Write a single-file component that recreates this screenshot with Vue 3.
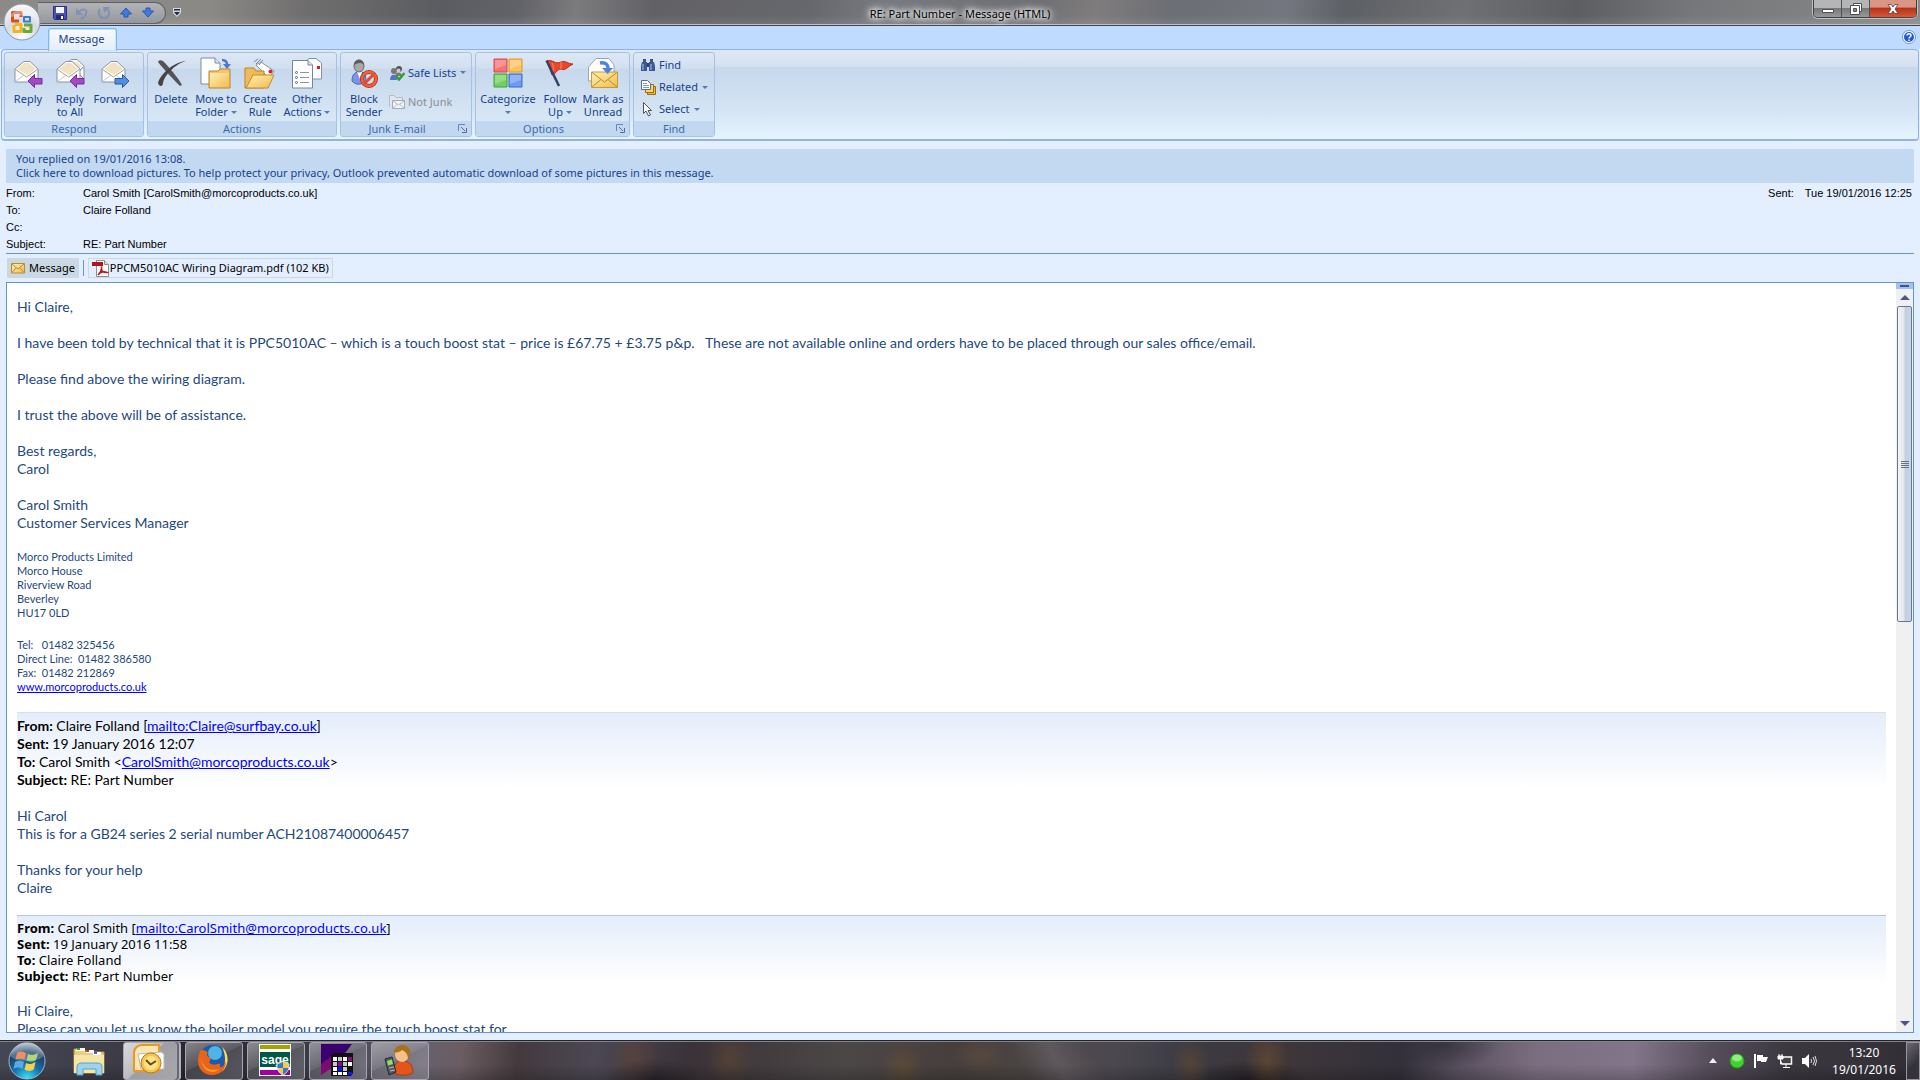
<script setup>
const envelope = `<path d="M3 12 L12 4.500 H18 L26 12 V25 H3Z" fill="#fdfdfd" stroke="#8b93a3"/><path d="M5 12 L12.500 6 H17 L24 12 L15 18Z" fill="#efe3c4"/><path d="M3.500 12.500 L14.500 20 L25.500 12.500" fill="none" stroke="#a9a28e"/><path d="M3.500 24.500 L12 18 M25.500 24.500 L17 18" stroke="#c6c9d2"/>`
const arrowLeft = `<path d="M16 24 L22.500 17.500 V21.500 H30 V27 H22.500 V30.500Z" fill="#a44ac4" stroke="#7a2c9b" stroke-linejoin="round"/>`

const icons = {
  reply: envelope + arrowLeft,
  replyAll: `<path d="M11 9 L17 2.500 H23 L30 9 V22 H12Z" fill="#fff" stroke="#8b93a3"/><path d="M13 9 L18 4.500 H22 L28 9 L22 14Z" fill="#efe3c4"/><path d="M29 10 L24 16 L29 21" fill="none" stroke="#777"/>` + envelope + arrowLeft,
  forward: envelope + `<path d="M30 24 L23.500 17.500 V21.500 H16 V27 H23.500 V30.500Z" fill="#4f8ee0" stroke="#27579f" stroke-linejoin="round"/>`,
  del: `<path d="M3 5 C4 2 8 3 10 6 C18 15 24 22 27 28 L25 29 C20 24 10 14 3 5Z" fill="#555"/><path d="M31 4 C22 6 10 17 8 26 C8 30 4 30 3 26 C5 18 18 5 31 4Z" fill="#454545"/>`,
  move: `<path d="M1 1 H15 L20 6 V27 H1Z" fill="#fff" stroke="#7e8aa5"/><path d="M15 1 V6 H20" fill="#dde4f0" stroke="#7e8aa5"/><path d="M9 14 H18 L20 12 H30 V31 H9Z" fill="#f3c66c" stroke="#b98527"/><path d="M10 16 H29 V30 H10Z" fill="url(#gold)"/><path d="M22 3 C26 3 27 5 27 8" fill="none" stroke="#4c79d0" stroke-width="2.500"/><path d="M23 7 H31 L27 12Z" fill="#4c79d0"/>`,
  create: `<path d="M12 8 L17 5 L30 14 L25 21Z" fill="#fff" stroke="#8a93a8"/><path d="M10 5 l4 -3 M12 7 l5 -5 M15 8 l4 -5" stroke="#7a8399"/><circle cx="26.500" cy="14.500" r="2" fill="#d22"/><path d="M1 31 V11 H10 L12 14 H20 V31Z" fill="#eebb55" stroke="#b98527"/><path d="M2 31 L9 18 H30 L24 31Z" fill="url(#gold)" stroke="#c08d2c"/>`,
  other: `<path d="M14 5 L18 1.500 H25 L30.500 6 V22 H14Z" fill="#fff" stroke="#8290ab"/><path d="M26 9 h3 v3 h-3z" fill="#c22"/><path d="M1.500 3.500 H17 L21.500 8 V31 H1.500Z" fill="#fff" stroke="#7785a2"/><path d="M17 3.500 V8 H21.500" fill="#dde4f0" stroke="#7785a2"/><path d="M9 15.500 H18 M9 20.500 H18 M9 25.500 H18" stroke="#8a94a8"/><g fill="#fff" stroke="#53607d"><circle cx="5.500" cy="15.500" r="1"/><circle cx="5.500" cy="20.500" r="1"/><circle cx="5.500" cy="25.500" r="1"/></g>`,
  block: `<path d="M4 24 C4 16 8 15 12 15 C17 15 18 19 18 25 C12 28 7 28 4 24Z" fill="#7d96e3" stroke="#4d62b5"/><path d="M9 15 L12 22 L14 15Z" fill="#fff"/><ellipse cx="11" cy="9" rx="5" ry="6" fill="#a9a9a9" stroke="#666"/><path d="M6 8 C6 1 16 1 16 8 C13 5 10 6 6 8Z" fill="#5d5d5d"/><circle cx="21" cy="22" r="7" fill="none" stroke="#b72b12" stroke-width="4"/><circle cx="21" cy="22" r="7" fill="none" stroke="#f0623e" stroke-width="2.500"/><path d="M16 27 L26 17" stroke="#e04e2b" stroke-width="3"/>`,
  categorize: `<path d="M2 2h13v13h-13z" fill="#f47174" stroke="#d8484e"/><path d="M17 2h13v13h-13z" fill="#fbc15c" stroke="#e09a1a"/><path d="M2 17h13v13h-13z" fill="#72d060" stroke="#3fa238"/><path d="M17 17h13v13h-13z" fill="#6d9cf0" stroke="#3b6bcd"/><path d="M3 3h11v5l-11 4zM18 3h11v5l-11 4zM3 18h11v5l-11 4zM18 18h11v5l-11 4z" fill="#fff" opacity=".25"/>`,
  flag: `<path d="M3 4 C9 2 11 8 17 5 C21 3 24 7 29 7 C23 10 22 14 17 12 C13 12 12 17 8 18Z" fill="#e8492b" stroke="#b72b12"/><path d="M8 6 C10 9 9 12 9 16 M17 5 V12" stroke="#ff8b67" fill="none"/><path d="M2.500 3.500 L15 29" stroke="#2f4168" stroke-width="2.500"/>`,
  unread: `<path d="M1.500 10 L9 1.500 H22 L27 8 V24 H1.500Z" fill="#fdfdfd" stroke="#9aa6ba"/><path d="M4.500 15 H30.500 V30.500 H4.500Z" fill="url(#gold)" stroke="#c69c2d"/><path d="M5 15.500 L17.500 25 L30 15.500 M5 30 L14 22.500 M30 30 L21 22.500" fill="none" stroke="#b98f2a"/><path d="M13 6 C19 5 21 8 21 11" fill="none" stroke="#4c84dd" stroke-width="3.500"/><path d="M15 11 H26 L20.500 17Z" fill="#4c84dd"/>`
}

const small = {
  safe: `<circle cx="5" cy="6" r="3" fill="#777"/><circle cx="10" cy="4" r="3" fill="#555"/><circle cx="9.500" cy="5.500" r="2" fill="#ccc"/><path d="M1 15 C1 8 8 8 8 15Z" fill="#5872c8"/><path d="M6 11 C7 6 13 7 13 11Z" fill="#777"/><path d="M7 11 L10 14.500 L15.500 8" fill="none" stroke="#2f9e2b" stroke-width="2.500"/>`,
  junk: `<path d="M.5 12.500 V1.500 H5 L7 3.500 H13.500 V6" fill="#e4e7ef" stroke="#b2b9c9"/><path d="M3.500 6.500 H15.500 V14.500 H3.500Z" fill="#f2f4f8" stroke="#a4abbd"/><path d="M4 7 L9.500 11 L15 7 M4 14 L8 10.500 M15 14 L11 10.500" fill="none" stroke="#b2b9c9"/>`,
  find: `<path d="M3 2h3v3h-3zM10 2h3v3h-3z" fill="#3d557f"/><path d="M2 5h5v9h-6V9zM9 5h5l1 4v5h-6z" fill="#3b5b95"/><path d="M7 6h2v4h-2z" fill="#2a4272"/><path d="M3 7v6M11 7v6" stroke="#a9c6f0"/>`,
  related: `<path d="M7.500 7.500h8v8h-8z" fill="#f4b72f" stroke="#996d0e"/><path d="M5.500 5.500h8v8h-8z" fill="#fbd573" stroke="#996d0e"/><path d="M1.500 1.500h6l3 3v6h-9z" fill="#fff" stroke="#5b6c91"/><path d="M3 4.500h4M3 6.500h6M3 8.500h6" stroke="#8b98b5"/>`,
  select: `<path d="M3.500 1.500 V12.500 L6 10 L8.500 15 L10.500 14 L8 9.500 H11.500Z" fill="#fff" stroke="#4b5368"/>`
}

const groups = [
  { name: 'Respond', width: 140, big: [
    { id: 'reply', w: 46, lines: ['Reply'] },
    { id: 'replyAll', w: 38, lines: ['Reply', 'to All'] },
    { id: 'forward', w: 52, lines: ['Forward'] }
  ] },
  { name: 'Actions', width: 190, big: [
    { id: 'del', w: 46, lines: ['Delete'] },
    { id: 'move', w: 44, lines: ['Move to', 'Folder'], drop: true },
    { id: 'create', w: 44, lines: ['Create', 'Rule'] },
    { id: 'other', w: 50, lines: ['Other', 'Actions'], drop: true }
  ] },
  { name: 'Junk E-mail', width: 132, launcher: true, big: [
    { id: 'block', w: 46, lines: ['Block', 'Sender'] }
  ], rows: [
    { id: 'safe', text: 'Safe Lists', drop: true },
    { id: 'junk', text: 'Not Junk', disabled: true }
  ] },
  { name: 'Options', width: 155, launcher: true, big: [
    { id: 'categorize', w: 64, lines: ['Categorize', ''], drop: true },
    { id: 'flag', w: 40, lines: ['Follow', 'Up'], drop: true },
    { id: 'unread', w: 46, lines: ['Mark as', 'Unread'] }
  ] },
  { name: 'Find', width: 82, big: [], rows: [
    { id: 'find', text: 'Find' },
    { id: 'related', text: 'Related', drop: true },
    { id: 'select', text: 'Select', drop: true }
  ] }
]
</script>

<template>
  <div class="screen">
    <svg class="defs" width="0" height="0" aria-hidden="true">
      <defs>
        <linearGradient id="gold" x1="0" y1="0" x2="1" y2="1"><stop offset="0" stop-color="#fff0b0" /><stop offset="1" stop-color="#f0bb52" /></linearGradient>
        <radialGradient id="orb" cx=".5" cy=".9" r=".9"><stop offset="0" stop-color="#fff" /><stop offset=".5" stop-color="#d5dae4" /><stop offset="1" stop-color="#fafbfd" /></radialGradient>
        <radialGradient id="start" cx=".5" cy="1" r="1"><stop offset="0" stop-color="#3fe6ff" /><stop offset=".4" stop-color="#1573ae" /><stop offset=".75" stop-color="#1d3e62" /><stop offset="1" stop-color="#a5bdd0" /></radialGradient>
      </defs>
    </svg>

    <header class="titlebar">
      <div class="qat">
        <button aria-label="Save"><svg width="16" height="16" viewBox="0 0 16 16"><path d="M1.500 1.500h13v13h-12l-1-1z" fill="#4b50b5" stroke="#2d2f86" /><path d="M4 2h8v6h-8z" fill="#f4f6fc" /><path d="M4 10h8v4h-8z" fill="#252a68" /><path d="M9 11h2v3h-2z" fill="#fff" /></svg></button>
        <button aria-label="Undo"><svg width="16" height="16" viewBox="0 0 16 16"><path d="M5 7 C8 3 14 4 12 9 C11 12 9 13 7 14" fill="none" stroke="#7f92b6" stroke-width="2" /><path d="M2 3v7h7z" fill="#7f92b6" /></svg></button>
        <button aria-label="Redo"><svg width="16" height="16" viewBox="0 0 16 16"><path d="M4 4 C1 8 4 13 8 13 C13 13 15 7 11 4" fill="none" stroke="#7f92b6" stroke-width="2" /><path d="M7 2h7l-6 6z" fill="#7f92b6" /></svg></button>
        <button aria-label="Previous item"><svg width="16" height="16" viewBox="0 0 16 16"><path d="M8 3L13.500 9H10V12H6V9H2.500Z" fill="#3f7be0" stroke="#2757b5" /></svg></button>
        <button aria-label="Next item"><svg width="16" height="16" viewBox="0 0 16 16"><path d="M8 12L13.500 6H10V3H6V6H2.500Z" fill="#3f7be0" stroke="#2757b5" /></svg></button>
      </div>
      <button class="qat-more" aria-label="Customize"><svg width="8" height="9" viewBox="0 0 8 9"><path d="M0 0h8v5L4 9 0 5z" fill="#d5d8df" /><path d="M1 1h6v1.500h-6zM1 4h6l-3 3.500z" fill="#1f2a44" /></svg></button>
      <h1 class="title">RE: Part Number - Message (HTML)</h1>
      <div class="winbtns">
        <button class="min" aria-label="Minimize"><svg width="14" height="12" viewBox="0 0 14 12"><path d="M1.500 6.500h11v3h-11z" fill="#fff" stroke="#4d5058" /></svg></button>
        <button class="max" aria-label="Restore"><svg width="14" height="14" viewBox="0 0 14 14"><path d="M4.500 1.500h8v8h-8z" fill="#fff" stroke="#4d5058" /><path d="M1.500 3.500h9v9h-9z" fill="#fff" stroke="#4d5058" /><path d="M4.500 6.500h3v3h-3z" fill="#888" stroke="#4d5058" /></svg></button>
        <button class="close" aria-label="Close"><svg width="12" height="12" viewBox="0 0 12 12"><path d="M1 1.500h3L6 4l2-2.500h3L8 6l3 4.500H8L6 8l-2 2.500H1L4 6Z" fill="#fff" stroke="#5d4044" stroke-width=".8" /></svg></button>
      </div>
    </header>

    <button class="office" aria-label="Office menu">
      <svg width="38" height="38" viewBox="0 0 38 38">
        <circle cx="19" cy="19" r="18" fill="url(#orb)" stroke="#8c95a5" />
        <g fill="none" stroke-width="3" stroke-linejoin="round">
          <path d="M16 18H9.500V9.500H18V14" stroke="#e04a16" />
          <path d="M21 14H27V18.500H21Z" stroke="#3a7ed0" stroke-width="2" />
          <path d="M12 21.500H18V28.500H11V22" stroke="#f5b318" />
          <path d="M21 22H28V28.500H21V25" stroke="#6aaa34" />
        </g>
        <path d="M5 15 A15 13 0 0 1 33 15 A30 20 0 0 0 5 15Z" fill="#fff" opacity=".35" />
      </svg>
    </button>

    <nav class="tabs">
      <button class="tab">Message</button>
      <button class="help" aria-label="Help"><svg width="14" height="14" viewBox="0 0 14 14"><circle cx="7" cy="7" r="6.500" fill="#fff" stroke="#6f96cf" /><circle cx="7" cy="7" r="5" fill="#2259cf" /><path d="M5 5.500C5 3 9 3 9 5.500C9 7 7 7 7 8.500M7 9.500V11" fill="none" stroke="#fff" stroke-width="1.500" /></svg></button>
    </nav>

    <section class="ribbon">
      <div v-for="g in groups" :key="g.name" class="group" :style="{ width: g.width + 'px' }">
        <div class="tools">
          <button v-for="b in g.big" :key="b.id" class="big" :style="{ width: b.w + 'px' }">
            <svg width="32" height="32" viewBox="0 0 32 32" v-html="icons[b.id]"></svg>
            <span v-for="(l, i) in b.lines" :key="i" class="line">{{ l }}<i v-if="b.drop && i === 1" class="caret" :class="{ alone: !l }"></i></span>
          </button>
          <div v-if="g.rows" class="rows" :class="{ pair: g.rows.length === 2 }">
            <button v-for="r in g.rows" :key="r.id" class="row" :disabled="r.disabled">
              <svg width="16" height="16" viewBox="0 0 16 16" v-html="small[r.id]"></svg>{{ r.text }}<i v-if="r.drop" class="caret"></i>
            </button>
          </div>
        </div>
        <div class="caption">
          <span class="name">{{ g.name }}</span>
          <button v-if="g.launcher" class="launcher" :aria-label="g.name + ' settings'"><svg width="9" height="9" viewBox="0 0 9 9"><path d="M.5 7V.5H7" fill="none" stroke="#6788b6" /><path d="M3 3l4 4M8.500 4v4.500H4" fill="none" stroke="#4d6e9e" /></svg></button>
        </div>
      </div>
    </section>

    <main class="message">
      <div class="info">
        <p>You replied on 19/01/2016 13:08.</p>
        <p>Click here to download pictures. To help protect your privacy, Outlook prevented automatic download of some pictures in this message.</p>
      </div>
      <div class="meta">
        <dl class="fields">
          <dt>From:</dt><dd>Carol Smith [CarolSmith@morcoproducts.co.uk]</dd>
          <dt>To:</dt><dd>Claire Folland</dd>
          <dt>Cc:</dt><dd></dd>
          <dt>Subject:</dt><dd>RE: Part Number</dd>
        </dl>
        <dl class="sent"><dt>Sent:</dt><dd>Tue 19/01/2016 12:25</dd></dl>
      </div>
      <div class="attachments">
        <button class="att current"><svg width="14" height="12" viewBox="0 0 14 12"><path d="M.5 1.500h13v9.500h-13z" fill="url(#gold)" stroke="#b78d32" /><path d="M1 2l6 5 6-5M1 10.500L5 6M13 10.500L9 6" fill="none" stroke="#b78d32" /></svg>Message</button>
        <span class="split"></span>
        <button class="att file"><svg width="17" height="17" viewBox="0 0 17 17"><path d="M4.500.5h8l4 4v12h-12z" fill="#fff" stroke="#909090" /><path d="M12.500.5v4h4" fill="#ddd" stroke="#909090" /><path d="M0 2h11v4h-11z" fill="#b3141b" /><path d="M6 15C9 12 10 9 9.500 6.500C9 12 12 13 15 12.500C12 11 8 12 6 15Z" fill="none" stroke="#c2151c" stroke-width="1.500" /></svg>PPCM5010AC Wiring Diagram.pdf (102 KB)</button>
      </div>

      <div class="reader">
        <article class="mail">
          <p>Hi Claire,</p>
          <p class="gap">I have been told by technical that it is PPC5010AC – which is a touch boost stat – price is £67.75 + £3.75 p&amp;p.&nbsp;&nbsp; These are not available online and orders have to be placed through our sales office/email.</p>
          <p class="gap">Please find above the wiring diagram.</p>
          <p class="gap">I trust the above will be of assistance.</p>
          <p class="gap">Best regards,<br>Carol</p>
          <p class="gap">Carol Smith<br>Customer Services Manager</p>
          <p class="gap fine">Morco Products Limited<br>Morco House<br>Riverview Road<br>Beverley<br>HU17 0LD</p>
          <p class="gap fine">Tel:&nbsp;&nbsp; 01482 325456<br>Direct Line:&nbsp; 01482 386580<br>Fax:&nbsp; 01482 212869<br><a href="#">www.morcoproducts.co.uk</a></p>
          <div class="quoted gap">
            <b>From:</b> Claire Folland [<a href="#">mailto:Claire@surfbay.co.uk</a>]<br>
            <b>Sent:</b> 19 January 2016 12:07<br>
            <b>To:</b> Carol Smith &lt;<a href="#">CarolSmith@morcoproducts.co.uk</a>&gt;<br>
            <b>Subject:</b> RE: Part Number
          </div>
          <p class="gap">Hi Carol<br>This is for a GB24 series 2 serial number ACH21087400006457</p>
          <p class="gap">Thanks for your help<br>Claire</p>
          <div class="quoted plain gap">
            <b>From:</b> Carol Smith [<a href="#">mailto:CarolSmith@morcoproducts.co.uk</a>]<br>
            <b>Sent:</b> 19 January 2016 11:58<br>
            <b>To:</b> Claire Folland<br>
            <b>Subject:</b> RE: Part Number
          </div>
          <p class="gap">Hi Claire,<br>Please can you let us know the boiler model you require the touch boost stat for</p>
        </article>
        <div class="scroll">
          <div class="splitter"></div>
          <button class="up" aria-label="Scroll up"></button>
          <div class="track"><div class="thumb"><i></i><i></i><i></i><i></i></div></div>
          <button class="down" aria-label="Scroll down"></button>
        </div>
      </div>
    </main>

    <footer class="taskbar">
      <button class="start" aria-label="Start"><svg width="38" height="38" viewBox="0 0 38 38"><circle cx="19" cy="19" r="18" fill="url(#start)" stroke="#9fb6c6" /><path d="M9 11C13 8 15 10 18 11L16.500 18C13 16 11 17 7.500 18Z" fill="#ee6a2c" /><path d="M20 12C23 14 26 13 30 11L28 18C25 20 22 20 18.500 18.500Z" fill="#9ac84c" /><path d="M7 20C10 18 13 18 16 20L14.500 27C11 25 9 25 5.500 27Z" fill="#58a9e8" /><path d="M18 21C21 23 24 22 27.500 20L26 27C23 30 19 29 16.500 27.500Z" fill="#fbcf45" /><path d="M3 15A16 15 0 0 1 35 15C26 20 12 20 3 15Z" fill="#fff" opacity=".25" /></svg></button>
      <button class="explorer" aria-label="Windows Explorer"><svg width="34" height="30" viewBox="0 0 34 30"><path d="M2 3h10l2 3h18v21H2z" fill="#e9cf7c" stroke="#b4964a" /><path d="M4 5h9v-3h-8zM14 7h8v-3h-8zM21 9h8v-3h-8z" fill="#fff" /><path d="M5 2h3v2h-3z" fill="#2ba02b" /><path d="M14 4h3v2h-3z" fill="#c33" /><path d="M22 6h3v2h-3z" fill="#36c" /><path d="M2 9h30v18H2z" fill="#f6e6a5" /><path d="M5 29V21C5 18 7 17 10 17H25C28 17 30 18 30 21V29H24V23H11V29Z" fill="#9dd3ee" stroke="#5a9fc8" /></svg></button>
      <div class="apps">
        <button class="app stacked" aria-label="Outlook"><svg width="34" height="32" viewBox="0 0 34 32"><path d="M2 27V9C2 5 5 1 10 1H27V27Z" fill="#fbe7b5" stroke="#e79a1c" stroke-width="2" /><path d="M6 10L29 8 32 10V25H9Z" fill="#fff" stroke="#b9b9b9" /><circle cx="19" cy="19" r="10" fill="#f7c548" stroke="#b47e1b" /><circle cx="19" cy="19" r="7" fill="#fce28d" /><path d="M14 16L18.500 20.500L24 17" fill="none" stroke="#6d4c13" stroke-width="2" /></svg></button>
        <button class="app" aria-label="Firefox"><svg width="32" height="32" viewBox="0 0 32 32"><circle cx="16" cy="15" r="14" fill="#1d5aa8" /><circle cx="18" cy="9" r="7" fill="#4eb3e8" /><path d="M25 3C32 9 33 20 25 28C29 20 29 11 25 3Z" fill="#fbdc5a" /><path d="M3 7C5 5 9 6 11 9C9 10 10 13 14 14C13 17 11 18 14 20C18 22 21 19 23 20C22 25 27 24 29 17C29 26 23 31 15 31C7 31 1 25 1 17C1 13 2 10 3 7Z" fill="#e8641b" /><path d="M4 13C5 23 12 28 22 25C17 31 4 28 4 13Z" fill="#f59a2c" /></svg></button>
        <button class="app" aria-label="Sage"><svg width="32" height="32" viewBox="0 0 32 32"><path d="M0 0h32v32H0z" fill="#fff" /><path d="M1 1h30v4H1z" fill="#a3a400" /><path d="M1 8h30v15H1z" fill="#005948" /><path d="M1 26h30v5H1z" fill="#a000a0" /><text x="16" y="20" text-anchor="middle" font-family="Liberation Sans, sans-serif" font-weight="700" font-size="12" fill="#fff">sage</text><path d="M18 20L24 17L30 20C30 26 28 29 24 31C20 29 18 26 18 20Z" fill="#f4cc3d" stroke="#dde" /><path d="M24 18V24H18.500V20.500ZM24 24H29.500C29 27 27 29 24 30.500Z" fill="#3578cf" /></svg></button>
        <button class="app" aria-label="Accounts"><svg width="32" height="32" viewBox="0 0 32 32"><path d="M0 0h31L22 12 0 31z" fill="#3a0070" /><path d="M0 20L14 10V22L0 31z" fill="#7c0a72" /><path d="M10 11L13 9H32V29L30 32H10Z" fill="#111" /><g fill="#fff"><path d="M12 13h4v4h-4zM22 13h4v4h-4zM12 23h4v4h-4zM27 18h4v4h-4zM17 28h4v3h-4zM22 28h4v3h-4zM12 28h4v3h-4z" /></g><g fill="#c8c8c8"><path d="M17 13h4v4h-4zM12 18h4v4h-4zM22 18h4v4h-4zM22 23h4v4h-4z" /></g><path d="M27 13h4v4h-4zM17 18h4v4h-4z" fill="#851080" /><path d="M17 23h4v4h-4zM27 28h4v3h-4z" fill="#11f" /></svg></button>
        <button class="app" aria-label="Phone contacts"><svg width="32" height="32" viewBox="0 0 32 32"><path d="M11 29C10 20 15 16 20 17C27 17 30 22 30 29C24 32 16 32 11 29Z" fill="#e2561d" stroke="#a83a10" /><ellipse cx="19" cy="10" rx="7" ry="8" fill="#f7c089" /><path d="M11 9C11 -1 26 -2 27 8C27 14 26 15 25 15C25 10 22 7 19 6C16 9 13 8 11 9Z" fill="#a9701b" /><path d="M2 15L9 13L13 28L6 31Z" fill="#525a60" stroke="#23292d" /><path d="M4 17L9 15.500L10 20L5 21.500Z" fill="#8ee06a" /><path d="M6 24l5-1M7 27l5-1" stroke="#bbb" /></svg></button>
      </div>
      <div class="tray">
        <button class="more" aria-label="Show hidden icons"><svg width="8" height="5" viewBox="0 0 8 5"><path d="M0 5L4 0L8 5Z" fill="#f0f0f0" /></svg></button>
        <button aria-label="Status"><svg width="16" height="16" viewBox="0 0 16 16"><circle cx="8" cy="8" r="7" fill="#3fd32f" stroke="#279b20" /><ellipse cx="8" cy="5" rx="5" ry="3.500" fill="#b4f5a4" opacity=".7" /></svg></button>
        <button aria-label="Action center"><svg width="16" height="16" viewBox="0 0 16 16"><path d="M2 1v14" stroke="#fff" stroke-width="2" /><path d="M4 2h6v2h5l-2 5h-5v-1h-4z" fill="#fff" /></svg></button>
        <button aria-label="Network"><svg width="16" height="16" viewBox="0 0 16 16"><path d="M5 4h9.500v7h-9.500" fill="#444" stroke="#fff" stroke-width="1.500" /><path d="M9 11v3M6 14.500h7M1 3h5v3h-5zM3.500 6v5h2M2 1v2M5 1v2" fill="#fff" stroke="#fff" /></svg></button>
        <button aria-label="Volume"><svg width="16" height="16" viewBox="0 0 16 16"><path d="M1 5h3l4-4v14l-4-4h-3z" fill="#fff" /><path d="M10 6q1 2 0 4M12 4q3 4 0 8M14 3q3 5 0 10" fill="none" stroke="#ddd" /></svg></button>
        <time class="clock">13:20<br>19/01/2016</time>
        <button class="desktop" aria-label="Show desktop"></button>
      </div>
    </footer>
  </div>
</template>

<style>
body { margin: 0; }
</style>

<style scoped>
* { box-sizing: border-box; }
.screen { position: relative; display: flex; flex-direction: column; height: 100vh; overflow: hidden; background: #e3eeff; color: #000; font: 11px/14px "Noto Sans", "Segoe UI", sans-serif; }
.defs { position: absolute; }
button { padding: 0; border: 0; background: none; color: inherit; font: inherit; }
svg { display: block; flex: none; }
p, dl, dd, h1 { margin: 0; }

.titlebar { display: flex; align-items: flex-start; height: 26px; flex: none; padding-left: 38px; background: linear-gradient(to bottom, #0000 60%, #ffffff18), linear-gradient(100deg, #8c8a87 0, #8b8985 11%, #6f6e6e 16%, #5b5c61 23%, #626369 27%, #7b7a7d 30%, #626266 34%, #66676c 42%, #777a80 46%, #6f6f74 54%, #7f7c7c 57%, #6c6e75 61%, #73767e 67%, #5d6065 70%, #6f7073 76%, #5c5e62 82%, #75777a 88%, #8a8a8a 100%); border-bottom: 1px solid #3d454e; box-shadow: inset 0 -1px #bfc3c4; }
.qat { display: flex; align-items: center; gap: 6px; width: 128px; height: 22px; margin-top: 2px; padding-left: 14px; border: 1px solid #5c6067; border-left: 0; border-radius: 0 11px 11px 0; background: linear-gradient(#b2b3b6, #96989d); }
.qat-more { margin: 8px 0 0 7px; }
.title { flex: 1; padding: 6px 74px 0 0; color: #000; font-size: 11px; line-height: 16px; font-weight: 400; text-align: center; text-shadow: 0 0 4px #ffffffcc, 0 0 6px #fff, 0 0 8px #fff, 0 0 10px #ddd; }
.winbtns { display: flex; height: 18px; margin-right: 3px; border: 1px solid #3f4145; border-top: 0; border-radius: 0 0 5px 5px; box-shadow: 0 0 0 1px #c0c0c0; overflow: hidden; }
.winbtns button { display: grid; place-items: center; width: 28px; background: linear-gradient(#b5b5b6 45%, #77787b 50%, #999); border-right: 1px solid #505258; }
.winbtns .close { width: 46px; border: 0; background: linear-gradient(#d99684 40%, #b8321a 50%, #d4593a); }

.office { position: absolute; left: 3px; top: 3px; }

.tabs { display: flex; justify-content: space-between; align-items: flex-start; height: 23px; flex: none; padding: 2px 4px 0 48px; background: #bfdbff; }
.tab { position: relative; width: 69px; height: 23px; padding: 0 2px 3px 0; border: 1px solid #8db2e3; border-bottom: 0; border-radius: 3px 3px 0 0; background: linear-gradient(#f7faff, #e4edf9); box-shadow: inset 0 0 0 1px #b9eaff; color: #15428b; }
.help { margin-top: 2px; }

.ribbon { display: flex; gap: 3px; height: 92px; flex: none; margin: 0 1px; padding: 2px 2px 0; border: 1px solid #8db2e3; border-bottom: 2px solid #95b3dc; border-radius: 4px; background: linear-gradient(#dfe9f5 0, #d5e1f1 18%, #c7d8ed 20%, #d6e5f5 70%, #e5f5fe 100%); }
.group { display: flex; flex-direction: column; height: 85px; border: 1px solid #a5c2e4; border-radius: 3px; background: linear-gradient(#dee8f5 0, #d1dfef 18%, #c7d8ed 20%, #d8e8f5 85%); overflow: hidden; }
.tools { display: flex; height: 68px; }
.big { display: flex; flex: none; flex-direction: column; align-items: center; padding-top: 4px; color: #15428b; line-height: 13px; white-space: nowrap; }
.big svg { margin-bottom: 3px; }
.line { min-height: 13px; }
.caret { display: inline-block; margin-left: 3px; vertical-align: 2px; border: 3px solid transparent; border-top-color: #567db1; border-bottom: 0; }
.alone { margin-left: 0; }
.rows { display: flex; flex-direction: column; padding: 1px 0 1px 6px; }
.pair { padding: 5px 0 5px 2px; }
.row { display: flex; flex: 1; align-items: center; gap: 3px; color: #15428b; white-space: nowrap; }
.row:disabled { color: #8d8d8d; }
.row .caret { margin-left: 1px; vertical-align: 0; }
.caption { display: flex; align-items: center; height: 15px; background: #c1d8f0; color: #3e6aaa; line-height: 15px; }
.name { flex: 1; text-align: center; }
.launcher { padding: 0 4px 0 5px; }

.message { display: flex; flex: 1; flex-direction: column; min-height: 0; padding: 8px 6px 7px; }
.info { height: 34px; flex: none; padding: 3px 10px; background: #c3d9f1; color: #15428b; }
.meta { display: flex; justify-content: space-between; height: 71px; flex: none; padding-top: 2px; border-bottom: 1px solid #6593cf; line-height: 17px; font-family: "Liberation Sans", Tahoma, sans-serif; }
.fields { display: grid; grid-template-columns: 77px auto; grid-auto-rows: 17px; }
.sent { display: flex; gap: 11px; padding-right: 2px; }
.attachments { display: flex; align-items: center; height: 28px; flex: none; gap: 4px; }
.att { display: flex; align-items: center; height: 20px; padding: 0 4px; gap: 4px; }
.current { margin-left: 1px; background: #c9d8e2; }
.split { width: 1px; height: 16px; background: #6593cf; }
.file { padding: 0 3px; gap: 1px; border: 1px solid #c9d8e2; }

.reader { display: flex; flex: 1; min-height: 0; border: 1px solid #6593cf; background: #fff; }
.mail { flex: 1; min-width: 0; padding: 15px 10px 0; overflow: hidden; color: #1f497d; font: 14px/18px Lato, Calibri, sans-serif; }
.gap { margin-top: 18px; }
.fine { font-size: 11px; line-height: 14px; }
.quoted { padding-top: 4px; border-top: 1px solid #d5dfe5; background: linear-gradient(#e4edfb, #fff); color: #000; }
.plain { border-top-color: #b5c4df; font: 13px/16px "Noto Sans", Tahoma, sans-serif; }
a { color: #00f; }
.scroll { display: flex; flex-direction: column; width: 17px; background: #f0f0f0; }
.splitter { height: 6px; border: solid #a3c0ee; border-width: 2px 4px; background: #42557f; }
.up, .down { display: grid; place-items: center; height: 17px; }
.up::after, .down::after { content: ""; border: 5px solid transparent; border-top: 0; border-bottom-color: #4a5780; }
.down::after { border-top: 5px solid #4a5780; border-bottom: 0; }
.track { flex: 1; }
.thumb { display: flex; flex-direction: column; align-items: center; justify-content: center; gap: 1px; height: 316px; margin: 0 1px; border: 1px solid #66759c; border-radius: 2px; background: linear-gradient(to right, #f5f5f7, #e4e6eb 45%, #c2cfe0 55%, #c9d5e5); }
.thumb i { width: 8px; height: 1px; background: #6b7484; }

.taskbar {
  display: flex; align-items: center; height: 40px; flex: none; padding-left: 8px; border-top: 1px solid #23232a; box-shadow: inset 0 1px #85838a;
  background:
    linear-gradient(#0000 60%, #0003),
    radial-gradient(26px 34px at 33% 40%, #7a4a2655, #0000),
    radial-gradient(24px 30px at 38% 45%, #7a552a55, #0000),
    radial-gradient(22px 30px at 47% 70%, #80572655, #0000),
    radial-gradient(28px 20px at 51% 35%, #6e563f66, #0000),
    radial-gradient(20px 30px at 62% 60%, #7a522b66, #0000),
    radial-gradient(22px 34px at 66% 50%, #855a2c66, #0000),
    radial-gradient(60px 20px at 65% 100%, #17151baa, #0000),
    radial-gradient(50px 22px at 34% 100%, #1f1a20aa, #0000),
    radial-gradient(60px 24px at 75% 10%, #33303acc, #0000),
    linear-gradient(60deg, #0000 53%, #6e667088 55%, #0000 57%),
    linear-gradient(95deg, #454754 0, #3b3a44 7%, #26242c 10%, #3a3a46 16%, #66616f 22%, #6b5d62 24%, #443a3e 27%, #4b4753 31%, #3b3238 36%, #4c4747 44%, #463e3c 50%, #4d4747 55%, #4c4850 58%, #3a3a42 62%, #40373a 66%, #33303a 73%, #5a5160 76%, #7b6e80 80%, #82758a 85%, #564d5b 89%, #3b3840 93%, #312e36 100%);
}
.explorer { margin: 0 17px 0 26px; }
.apps { display: flex; align-items: stretch; gap: 4px; height: 38px; }
.app { display: grid; place-items: center; width: 58px; padding: 0 2px 2px 0; border: 1px solid #aaa5b2; border-radius: 3px; background: linear-gradient(155deg, #ffffff70, #ffffff38 45%, #ffffff28 46%, #ffffff35); }
.stacked { width: 54px; margin-right: 4px; background: linear-gradient(135deg, #f1f2f4dd, #ffffffaa 45%, #ffffff88 46%, #ffffff99); box-shadow: 2px 0 #666874, 4px 0 #b2b3bb; }
.tray { display: flex; align-items: center; gap: 8px; height: 38px; margin-left: auto; color: #fff; }
.more { margin-right: 4px; }
.clock { width: 68px; margin-left: 5px; font-size: 12px; line-height: 17px; text-align: center; }
.desktop { width: 14px; height: 38px; border: 1px solid #97949d; background: linear-gradient(135deg, #6b6873, #34323a 60%); }
</style>
